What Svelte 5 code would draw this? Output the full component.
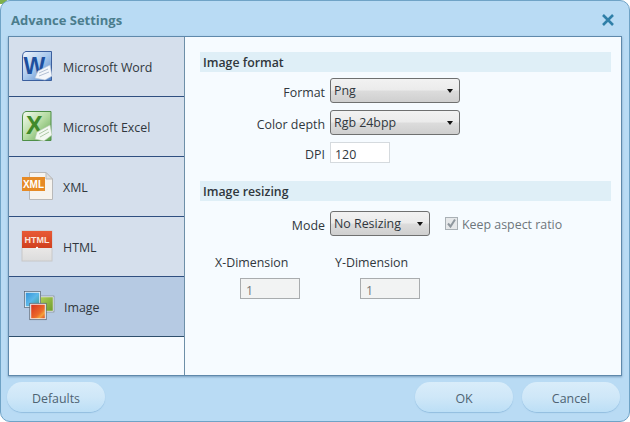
<script>
  const tabs = [
    { id: 'word', label: 'Microsoft Word' },
    { id: 'excel', label: 'Microsoft Excel' },
    { id: 'xml', label: 'XML' },
    { id: 'html', label: 'HTML' },
    { id: 'image', label: 'Image' }
  ];
  let active = 'image';
</script>

<div class="page">
  <div class="corner"></div>
  <div class="window">
    <header class="title-bar">
      <h1>Advance Settings</h1>
      <svg class="close" width="14" height="14" viewBox="0 0 14 14">
        <path d="M2 2 L12 12 M12 2 L2 12" stroke="#2f7fa8" stroke-width="2.6" />
      </svg>
    </header>

    <div class="body">
      <nav class="sidebar">
        {#each tabs as t (t.id)}
          <div class="tab" class:selected={t.id === active}>
            <span class="icon">
              {#if t.id === 'word'}
                <svg width="32" height="32" viewBox="0 0 32 32">
                  <defs>
                    <linearGradient id="wg" x1="0" y1="0" x2="1" y2="1">
                      <stop offset="0" stop-color="#f4f8fd" /><stop offset="0.5" stop-color="#a9c8ec" /><stop offset="1" stop-color="#4d80c6" />
                    </linearGradient>
                  </defs>
                  <path d="M5 1.5 H30.5 V30.5 H1.5 V7 Q1.5 2 5 1.5 Z" fill="url(#wg)" stroke="#3b5f9e" />
                  <text x="2.5" y="24" class="word-w">W</text>
                  <path d="M17 21 L29 15 L31 26 L24 30 L14 28 Z" fill="#f4f7fb" stroke="#b5c4d8" stroke-width="0.6" />
                  <path d="M18 23 L27 19 M18 26 L28 22" stroke="#9fb0c8" stroke-width="0.8" />
                </svg>
              {:else if t.id === 'excel'}
                <svg width="32" height="32" viewBox="0 0 32 32">
                  <defs>
                    <linearGradient id="xg" x1="0" y1="0" x2="1" y2="1">
                      <stop offset="0" stop-color="#f6fbf2" /><stop offset="0.5" stop-color="#b5dba2" /><stop offset="1" stop-color="#5da24b" />
                    </linearGradient>
                  </defs>
                  <path d="M5 1.5 H30 V30.5 H1.5 V7 Q1.5 2 5 1.5 Z" fill="url(#xg)" stroke="#4e8f47" />
                  <text x="5" y="24" class="excel-x">X</text>
                  <path d="M16 22 L29 15 L31 25 L23 31 L14 29 Z" fill="#f3f8f1" stroke="#b4c9ae" stroke-width="0.6" />
                  <path d="M18 24 L27 19 M19 27 L28 22" stroke="#9dbd94" stroke-width="0.8" />
                </svg>
              {:else if t.id === 'xml'}
                <svg width="32" height="30" viewBox="0 0 32 30">
                  <path d="M8.5 1.5 H25 L31.5 8 V28.5 H8.5 Z" fill="#f6f3ee" stroke="#b9b9b9" />
                  <path d="M25 1.5 V8 H31.5 Z" fill="#dedede" stroke="#b9b9b9" />
                  <rect x="1" y="6" width="23" height="14" fill="#e68a25" />
                  <text x="12.5" y="17" class="xml-t">XML</text>
                </svg>
              {:else if t.id === 'html'}
                <svg width="32" height="32" viewBox="0 0 32 32">
                  <defs>
                    <linearGradient id="hg" x1="0" y1="0" x2="0" y2="1">
                      <stop offset="0" stop-color="#e85a36" /><stop offset="1" stop-color="#d0401f" />
                    </linearGradient>
                    <linearGradient id="hb" x1="0" y1="0" x2="0" y2="1">
                      <stop offset="0" stop-color="#fbf7f4" /><stop offset="1" stop-color="#dcdcdc" />
                    </linearGradient>
                  </defs>
                  <rect x="1" y="1" width="30" height="30" fill="url(#hb)" stroke="#c8c8c8" />
                  <rect x="1" y="1" width="30" height="17" fill="url(#hg)" />
                  <text x="16" y="13" class="html-t">HTML</text>
                  <circle cx="16" cy="18" r="1.2" fill="#fbf7f4" />
                </svg>
              {:else}
                <svg width="32" height="32" viewBox="0 0 32 32">
                  <defs>
                    <linearGradient id="ib" x1="0" y1="0" x2="1" y2="1">
                      <stop offset="0" stop-color="#2f8fd6" /><stop offset="0.5" stop-color="#5cb8ea" /><stop offset="1" stop-color="#3f9a8a" />
                    </linearGradient>
                    <linearGradient id="ig" x1="0" y1="0" x2="1" y2="1">
                      <stop offset="0" stop-color="#b2d25a" /><stop offset="1" stop-color="#6c9a2c" />
                    </linearGradient>
                    <linearGradient id="ir" x1="0" y1="0" x2="1" y2="1">
                      <stop offset="0" stop-color="#d42f20" /><stop offset="0.6" stop-color="#ec6a2a" /><stop offset="0.75" stop-color="#f3a03a" /><stop offset="1" stop-color="#d8371f" />
                    </linearGradient>
                  </defs>
                  <rect x="16.5" y="6.5" width="14" height="15" fill="url(#ig)" stroke="#f4f6f8" stroke-width="1.4" />
                  <rect x="16" y="6" width="15" height="16" fill="none" stroke="#5e6e78" stroke-width="0.6" />
                  <rect x="2" y="2" width="15" height="15" fill="url(#ib)" stroke="#f4f6f8" stroke-width="1.4" />
                  <rect x="1.4" y="1.4" width="16.2" height="16.2" fill="none" stroke="#4d5f70" stroke-width="0.7" />
                  <rect x="7.5" y="14" width="15" height="15" fill="url(#ir)" stroke="#f4f6f8" stroke-width="1.4" />
                  <rect x="6.8" y="13.3" width="16.4" height="16.4" fill="none" stroke="#4d5560" stroke-width="0.7" />
                </svg>
              {/if}
            </span>
            <span class="tab-label">{t.label}</span>
          </div>
        {/each}
      </nav>

      <main class="panel">
        <section class="section">
          <h2>Image format</h2>
          <div class="form-grid">
            <span class="lbl">Format</span>
            <div class="select wide">Png</div>
            <span class="lbl">Color depth</span>
            <div class="select wide">Rgb 24bpp</div>
            <span class="lbl">DPI</span>
            <div class="input dpi">120</div>
          </div>
        </section>

        <section class="section resize">
          <h2>Image resizing</h2>
          <div class="form-grid mode-row">
            <span class="lbl">Mode</span>
            <div class="mode-controls">
              <div class="select narrow">No Resizing</div>
              <div class="check-wrap">
                <span class="check">
                  <svg width="11" height="11" viewBox="0 0 11 11">
                    <path d="M2 5.5 L4.5 8.5 L9 1.5" fill="none" stroke="#8f979e" stroke-width="2" />
                  </svg>
                </span>
                <span class="check-label">Keep aspect ratio</span>
              </div>
            </div>
          </div>
          <div class="dims">
            <div class="dim">
              <span class="dim-label">X-Dimension</span>
              <div class="input disabled">1</div>
            </div>
            <div class="dim">
              <span class="dim-label">Y-Dimension</span>
              <div class="input disabled">1</div>
            </div>
          </div>
        </section>
      </main>
    </div>

    <footer class="footer">
      <button class="btn">Defaults</button>
      <div class="footer-right">
        <button class="btn">OK</button>
        <button class="btn">Cancel</button>
      </div>
    </footer>
  </div>
</div>

<style>
  :global(body) { margin: 0; background: #fff; }
  .page {
    width: 630px;
    height: 422px;
    position: relative;
    overflow: hidden;
    font-family: "Open Sans", "Noto Sans", sans-serif;
    font-size: 12.4px;
    color: #30373d;
  }
  .corner { position: absolute; left: 0; top: 0; width: 7px; height: 4px; background: #7fb04a; border-radius: 0 0 5px 0; }
  .window {
    position: relative;
    box-sizing: border-box;
    width: 630px;
    height: 422px;
    background: #b9dbf4;
    border: 1px solid #6fa3c6;
    border-radius: 10px;
    display: flex;
    flex-direction: column;
  }
  .title-bar {
    height: 35px;
    flex: none;
    box-sizing: border-box;
    padding: 0 14px 0 10px;
    display: flex;
    align-items: center;
    justify-content: space-between;
  }
  h1 { margin: 3px 0 0; font-size: 13px; font-weight: 700; color: #4b7d8d; }
  .close { margin-top: 2px; }
  .body {
    height: 340px;
    flex: none;
    box-sizing: border-box;
    margin: 0 7px;
    width: 614px;
    display: flex;
    background: #f6fbff;
    border: 1px solid #5f89ab;
    box-shadow: 0 1px 2px rgba(60, 100, 140, 0.5);
  }
  .sidebar {
    width: 176px;
    flex: none;
    box-sizing: border-box;
    background: #f7fbff;
    border-right: 1px solid #6d8fa8;
  }
  .tab {
    box-sizing: border-box;
    height: 60px;
    background: #d5dfec;
    border-bottom: 1px solid #2f4f80;
    display: flex;
    align-items: center;
    padding-left: 12px;
    padding-bottom: 1px;
  }
  .tab.selected { background: #b6cae3; border-bottom-color: #2f4f6c; padding-left: 14px; }
  .icon { width: 32px; height: 32px; display: flex; align-items: center; flex: none; }
  .tab-label { margin-left: 10px; padding-top: 2px; }
  .tab.selected .tab-label { margin-left: 9px; }
  .word-w { font: 700 23px "Liberation Sans", sans-serif; fill: #1d4f9e; }
  .excel-x { font: 700 25px "Liberation Sans", sans-serif; fill: #3f8a2a; }
  .xml-t { font: 700 10px "Liberation Sans", sans-serif; fill: #fff; text-anchor: middle; }
  .html-t { font: 700 9px "Liberation Sans", sans-serif; fill: #fbe6dc; text-anchor: middle; }
  .panel {
    flex: 1;
    min-width: 0;
    box-sizing: border-box;
    padding: 15px 10px 0 15px;
  }
  h2 {
    margin: 0;
    height: 20px;
    line-height: 21px;
    background: #dfeff7;
    padding-left: 3px;
    font-size: 12.3px;
    font-weight: 600;
    color: #30373d;
  }
  .resize { margin-top: 18px; }
  .form-grid {
    display: grid;
    grid-template-columns: 125px auto;
    justify-content: start;
    column-gap: 5px;
    row-gap: 7px;
    align-items: center;
    margin-top: 6px;
  }
  .mode-row { margin-top: 10px; }
  .lbl { text-align: right; padding-top: 3px; }
  .select {
    position: relative;
    box-sizing: border-box;
    height: 25px;
    line-height: 24px;
    padding-left: 3px;
    border: 1px solid #6f7070;
    border-radius: 3px;
    background: linear-gradient(#f2f2f2, #ebebeb 48%, #dcdcdc 52%, #cfcfcf);
  }
  .select::after {
    content: '';
    position: absolute;
    right: 6px;
    top: 10px;
    border: 3.5px solid transparent;
    border-top: 4px solid #111;
    border-bottom: 0;
  }
  .wide { width: 130px; }
  .narrow { width: 100px; }
  .input {
    box-sizing: border-box;
    height: 21px;
    width: 60px;
    border: 1px solid #d5dade;
    background: #fff;
    padding-left: 4px;
    line-height: 23px;
  }
  .input.disabled { background: #f2f3f3; border-color: #a9acae; color: #777; padding-left: 5px; }
  .mode-controls { display: flex; align-items: center; }
  .check-wrap { display: flex; align-items: center; margin-left: 15px; gap: 4px; color: #6e767c; }
  .check-label { padding-top: 2px; }
  .check {
    box-sizing: border-box;
    width: 13px;
    height: 13px;
    border: 1px solid #a9b0b5;
    background: #e6e8ea;
    display: flex;
    align-items: center;
    justify-content: center;
  }
  .dims { display: flex; margin-top: 16px; padding-left: 15px; }
  .dim { width: 120px; display: flex; flex-direction: column; }
  .dim-label { height: 22px; line-height: 22px; }
  .dim .input { margin: 4px 0 0 25px; }
  .footer {
    flex: 1;
    display: flex;
    justify-content: space-between;
    padding: 6px 9px 0 6px;
    align-items: flex-start;
  }
  .footer-right { display: flex; gap: 9px; }
  .btn {
    width: 98px;
    height: 30px;
    border: 0;
    border-radius: 15px;
    background: linear-gradient(#d9edfa, #cfe7f8 50%, #bcdff6);
    box-shadow: 0 1px 1px rgba(120, 170, 210, 0.6);
    color: #4e6373;
    font: inherit;
    padding: 2px 0 0;
  }
</style>
